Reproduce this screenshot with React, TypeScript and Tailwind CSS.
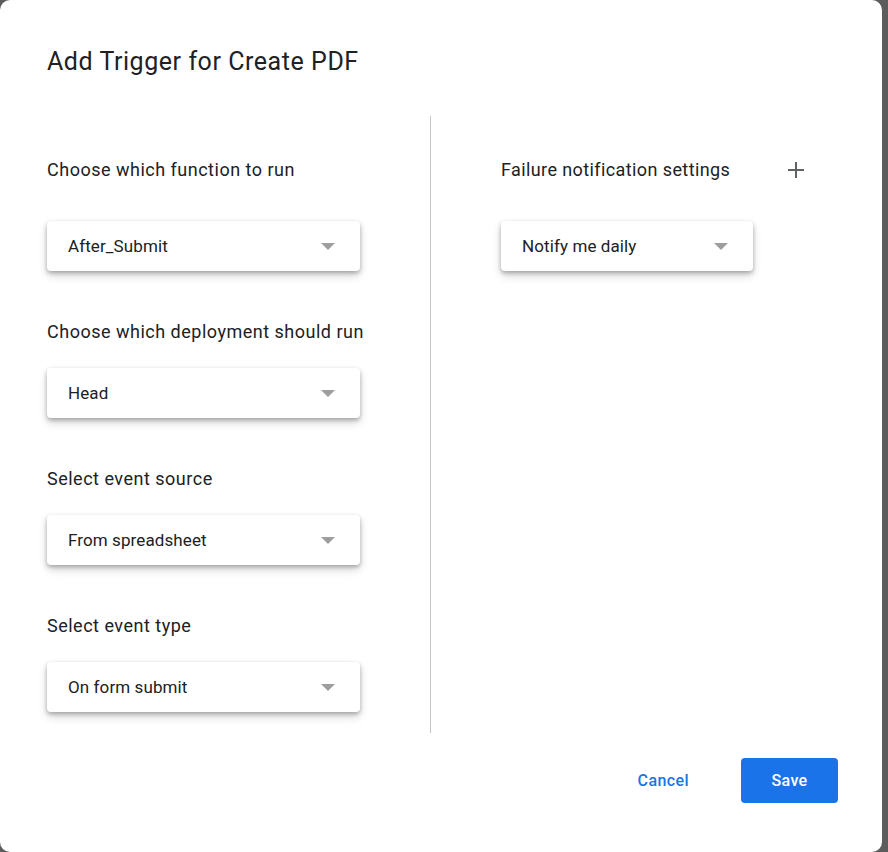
import React from 'react';

function Select({ value, width }: { value: string; width: string }) {
    return (
        <div
            className={`${width} flex h-[50px] items-center justify-between rounded-[4px] bg-white pl-[21px] pr-[25px] shadow-[0_2px_4px_rgba(0,0,0,0.28),0_5px_10px_rgba(0,0,0,0.15)]`}
        >
            <span className="pt-px text-[17px] tracking-[0.1px] text-[#202124]">{value}</span>
            <span className="h-0 w-0 border-x-[7px] border-t-[7px] border-x-transparent border-t-[#9e9e9e]" />
        </div>
    );
}

function Field({ label, value, first }: { label: string; value: string; first?: boolean }) {
    return (
        <div className="flex flex-col">
            <div className="text-[18px] leading-6 tracking-[0.5px] text-[#202124]">{label}</div>
            <div className={first ? 'mt-[39px]' : 'mt-6'}>
                <Select value={value} width="w-[313px]" />
            </div>
        </div>
    );
}

export default function App() {
    return (
        <div className="flex h-[852px] w-full bg-[#5c5c5c] font-['Roboto',sans-serif]">
            <div className="flex h-full w-[882px] flex-col rounded-[10px] bg-white">
                {/* Title */}
                <h1 className="pl-[47px] pt-[46px] text-[25px] leading-8 tracking-[0.55px] text-[#202124]">
                    Add Trigger for Create PDF
                </h1>

                <div className="mt-[38px] flex h-[617px]">
                    {/* Left column */}
                    <div className="flex w-[430px] shrink-0 flex-col gap-[49px] pl-[47px] pt-[42px]">
                        <Field label="Choose which function to run" value="After_Submit" first />
                        <Field label="Choose which deployment should run" value="Head" />
                        <Field label="Select event source" value="From spreadsheet" />
                        <Field label="Select event type" value="On form submit" />
                    </div>

                    <div className="w-px bg-[#c4c4c8]" />

                    {/* Right column */}
                    <div className="flex flex-col pl-[70px] pt-[42px]">
                        <div className="flex w-[305px] items-center justify-between">
                            <span className="text-[18px] leading-6 tracking-[0.4px] text-[#202124]">
                                Failure notification settings
                            </span>
                            <svg width="18" height="18" viewBox="0 0 18 18" className="mr-[1px]">
                                <path d="M9 1v16M1 9h16" stroke="#5f6368" strokeWidth="2" />
                            </svg>
                        </div>
                        <div className="mt-[39px]">
                            <Select value="Notify me daily" width="w-[252px]" />
                        </div>
                    </div>
                </div>

                {/* Footer */}
                <div className="mt-[25px] flex items-center justify-end pr-[44px]">
                    <button className="mr-[28px] px-[24px] py-2 text-[16px] font-medium tracking-[0.4px] text-[#1a73e8]">
                        Cancel
                    </button>
                    <button className="h-[45px] w-[97px] rounded-[4px] bg-[#1a73e8] text-[16px] font-medium tracking-[0.3px] text-white">
                        Save
                    </button>
                </div>
            </div>
        </div>
    );
}
